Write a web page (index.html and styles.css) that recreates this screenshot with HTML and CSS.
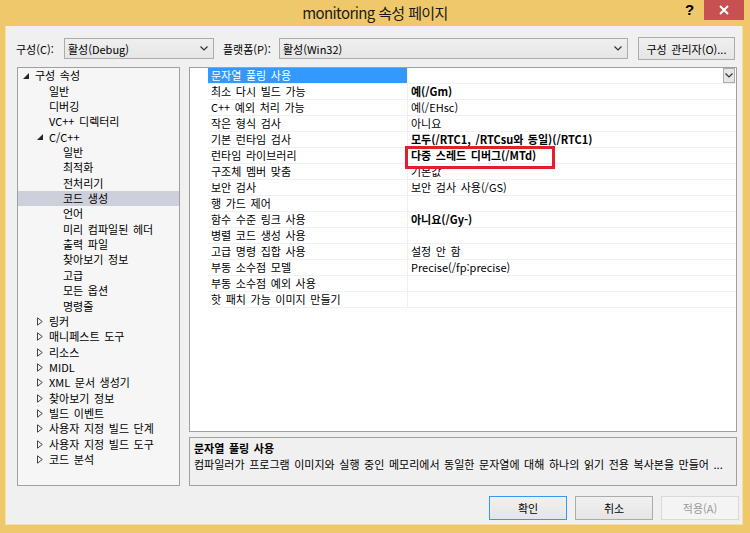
FILE: index.html
```html
<!DOCTYPE html>
<html lang="ko">
<head>
<meta charset="utf-8">
<link rel="stylesheet" href="styles.css">
</head>
<body>
<div class="window">
  <div class="titlebar">
    <div class="title">monitoring 속성 페이지</div>
    <div class="help">?</div>
    <div class="close"><svg width="10" height="10" viewBox="0 0 10 10"><path d="M1 1L9 9M9 1L1 9" stroke="#fff" stroke-width="2"/></svg></div>
  </div>
  <div class="client">
    <div class="toolbar">
      <span class="lbl lbl1">구성(C):</span>
      <div class="combo combo1"><span>활성(Debug)</span><svg class="chev" width="8" height="5" viewBox="0 0 8 5"><path d="M0.5 0.5L4 4L7.5 0.5" fill="none" stroke="#333" stroke-width="1.2"/></svg></div>
      <span class="lbl lbl2">플랫폼(P):</span>
      <div class="combo combo2"><span>활성(Win32)</span><svg class="chev" width="8" height="5" viewBox="0 0 8 5"><path d="M0.5 0.5L4 4L7.5 0.5" fill="none" stroke="#333" stroke-width="1.2"/></svg></div>
      <div class="btn cfgbtn">구성 관리자(O)...</div>
    </div>
    <div class="main">
      <div class="tree">
        <div class="ti l0"><span class="arr"><svg width="6" height="6" viewBox="0 0 6 6"><path d="M6 0V6H0Z" fill="#262626"/></svg></span>구성 속성</div>
        <div class="ti l1"><span class="arr"></span>일반</div>
        <div class="ti l1"><span class="arr"></span>디버깅</div>
        <div class="ti l1"><span class="arr"></span>VC++ 디렉터리</div>
        <div class="ti l1"><span class="arr"><svg width="6" height="6" viewBox="0 0 6 6"><path d="M6 0V6H0Z" fill="#262626"/></svg></span>C/C++</div>
        <div class="ti l2"><span class="arr"></span>일반</div>
        <div class="ti l2"><span class="arr"></span>최적화</div>
        <div class="ti l2"><span class="arr"></span>전처리기</div>
        <div class="ti l2 sel"><span class="arr"></span>코드 생성</div>
        <div class="ti l2"><span class="arr"></span>언어</div>
        <div class="ti l2"><span class="arr"></span>미리 컴파일된 헤더</div>
        <div class="ti l2"><span class="arr"></span>출력 파일</div>
        <div class="ti l2"><span class="arr"></span>찾아보기 정보</div>
        <div class="ti l2"><span class="arr"></span>고급</div>
        <div class="ti l2"><span class="arr"></span>모든 옵션</div>
        <div class="ti l2"><span class="arr"></span>명령줄</div>
        <div class="ti l1"><span class="arr"><svg width="6" height="9" viewBox="0 0 6 9"><path d="M0.5 0.8V8.2L5.3 4.5Z" fill="none" stroke="#444" stroke-width="1"/></svg></span>링커</div>
        <div class="ti l1"><span class="arr"><svg width="6" height="9" viewBox="0 0 6 9"><path d="M0.5 0.8V8.2L5.3 4.5Z" fill="none" stroke="#444" stroke-width="1"/></svg></span>매니페스트 도구</div>
        <div class="ti l1"><span class="arr"><svg width="6" height="9" viewBox="0 0 6 9"><path d="M0.5 0.8V8.2L5.3 4.5Z" fill="none" stroke="#444" stroke-width="1"/></svg></span>리소스</div>
        <div class="ti l1"><span class="arr"><svg width="6" height="9" viewBox="0 0 6 9"><path d="M0.5 0.8V8.2L5.3 4.5Z" fill="none" stroke="#444" stroke-width="1"/></svg></span>MIDL</div>
        <div class="ti l1"><span class="arr"><svg width="6" height="9" viewBox="0 0 6 9"><path d="M0.5 0.8V8.2L5.3 4.5Z" fill="none" stroke="#444" stroke-width="1"/></svg></span>XML 문서 생성기</div>
        <div class="ti l1"><span class="arr"><svg width="6" height="9" viewBox="0 0 6 9"><path d="M0.5 0.8V8.2L5.3 4.5Z" fill="none" stroke="#444" stroke-width="1"/></svg></span>찾아보기 정보</div>
        <div class="ti l1"><span class="arr"><svg width="6" height="9" viewBox="0 0 6 9"><path d="M0.5 0.8V8.2L5.3 4.5Z" fill="none" stroke="#444" stroke-width="1"/></svg></span>빌드 이벤트</div>
        <div class="ti l1"><span class="arr"><svg width="6" height="9" viewBox="0 0 6 9"><path d="M0.5 0.8V8.2L5.3 4.5Z" fill="none" stroke="#444" stroke-width="1"/></svg></span>사용자 지정 빌드 단계</div>
        <div class="ti l1"><span class="arr"><svg width="6" height="9" viewBox="0 0 6 9"><path d="M0.5 0.8V8.2L5.3 4.5Z" fill="none" stroke="#444" stroke-width="1"/></svg></span>사용자 지정 빌드 도구</div>
        <div class="ti l1"><span class="arr"><svg width="6" height="9" viewBox="0 0 6 9"><path d="M0.5 0.8V8.2L5.3 4.5Z" fill="none" stroke="#444" stroke-width="1"/></svg></span>코드 분석</div>
      </div>
      <div class="rightcol">
        <div class="grid">
          <div class="prow selrow"><span class="gut"></span><span class="pname">문자열 풀링 사용</span><span class="pval ddcell"><span class="ddbtn"><svg width="8" height="5" viewBox="0 0 8 5"><path d="M0.5 0.5L4 4L7.5 0.5" fill="none" stroke="#333" stroke-width="1.2"/></svg></span></span></div>
          <div class="prow"><span class="gut"></span><span class="pname">최소 다시 빌드 가능</span><span class="pval b">예(/Gm)</span></div>
          <div class="prow"><span class="gut"></span><span class="pname">C++ 예외 처리 가능</span><span class="pval">예(/EHsc)</span></div>
          <div class="prow"><span class="gut"></span><span class="pname">작은 형식 검사</span><span class="pval">아니요</span></div>
          <div class="prow"><span class="gut"></span><span class="pname">기본 런타임 검사</span><span class="pval b">모두(/RTC1, /RTCsu와 동일)(/RTC1)</span></div>
          <div class="prow"><span class="gut"></span><span class="pname">런타임 라이브러리</span><span class="pval b">다중 스레드 디버그(/MTd)</span></div>
          <div class="prow"><span class="gut"></span><span class="pname">구조체 멤버 맞춤</span><span class="pval">기본값</span></div>
          <div class="prow"><span class="gut"></span><span class="pname">보안 검사</span><span class="pval">보안 검사 사용(/GS)</span></div>
          <div class="prow"><span class="gut"></span><span class="pname">행 가드 제어</span><span class="pval"></span></div>
          <div class="prow"><span class="gut"></span><span class="pname">함수 수준 링크 사용</span><span class="pval b">아니요(/Gy-)</span></div>
          <div class="prow"><span class="gut"></span><span class="pname">병렬 코드 생성 사용</span><span class="pval"></span></div>
          <div class="prow"><span class="gut"></span><span class="pname">고급 명령 집합 사용</span><span class="pval">설정 안 함</span></div>
          <div class="prow"><span class="gut"></span><span class="pname">부동 소수점 모델</span><span class="pval">Precise(/fp:precise)</span></div>
          <div class="prow"><span class="gut"></span><span class="pname">부동 소수점 예외 사용</span><span class="pval"></span></div>
          <div class="prow"><span class="gut"></span><span class="pname">핫 패치 가능 이미지 만들기</span><span class="pval"></span></div>
          <div class="redbox"></div>
        </div>
        <div class="desc">
          <div class="dtitle">문자열 풀링 사용</div>
          <div class="dtext">컴파일러가 프로그램 이미지와 실행 중인 메모리에서 동일한 문자열에 대해 하나의 읽기 전용 복사본을 만들어 ...</div>
        </div>
      </div>
    </div>
    <div class="buttons">
      <div class="btn dbtn default">확인</div>
      <div class="btn dbtn">취소</div>
      <div class="btn dbtn disabled">적용(A)</div>
    </div>
  </div>
</div>
</body>
</html>
```
FILE: styles.css
```css
* { box-sizing: border-box; }
html, body { margin: 0; padding: 0; }
body {
  width: 750px; height: 533px; overflow: hidden;
  font-family: "Noto Sans CJK KR", sans-serif;
  font-size: 11px;
  letter-spacing: 0;
  word-spacing: 1.5px;
  color: #000;
}
.window {
  width: 750px; height: 533px;
  background: #efc86c;
  display: flex; flex-direction: column;
}
.titlebar {
  height: 26px; position: relative; flex: none;
  display: flex; align-items: center; justify-content: center;
}
.title { font-size: 15px; letter-spacing: -0.6px; word-spacing: 0; color: #1a1a1a; margin-top: -1px; }
.help {
  position: absolute; left: 685px; top: 1px;
  font-family: "Liberation Sans", sans-serif; font-weight: bold; font-size: 15px;
}
.close {
  position: absolute; left: 704px; top: 0; width: 40px; height: 20px;
  background: #c75050; display: flex; align-items: center; justify-content: center;
}
.client {
  flex: 1; margin: 0 7px 8px 5px;
  background: #f0f0f0;
  border: 1px solid #f7e0a8; border-top: none;
  padding: 11px 0 0 10px;
  display: flex; flex-direction: column;
}
.toolbar { display: flex; align-items: center; height: 23px; }
.lbl { flex: none; }
.lbl1 { width: 48px; }
.lbl2 { width: 56px; margin-left: 9px; }
.combo {
  height: 21px; border: 1px solid #acacac;
  background: linear-gradient(#efefef, #e6e6e6);
  display: flex; align-items: center; justify-content: space-between;
  padding: 0 5px 0 3px;
}
.combo1 { width: 150px; }
.combo2 { width: 349px; }
.chev { flex: none; }
.btn {
  border: 1px solid #acacac;
  background: linear-gradient(#f0f0f0, #e5e5e5);
  display: flex; align-items: center; justify-content: center;
}
.cfgbtn { width: 97px; height: 23px; margin-left: 10px; }
.main { display: flex; margin-top: 7px; height: 419px; padding-left: 1px; }
.tree {
  width: 163px; height: 419px; flex: none;
  border: 1px solid #a0a0a0;
  background: #f6f6f6;
}
.ti { height: 15.36px; line-height: 15px; display: flex; align-items: center; white-space: nowrap; }
.ti.sel { background: #cdcfdb; }
.arr { width: 12px; flex: none; display: flex; align-items: center; }
.l0 { padding-left: 5px; }
.l1 { padding-left: 19px; }
.l2 { padding-left: 33px; }
.rightcol { margin-left: 9px; width: 548px; display: flex; flex-direction: column; }
.grid {
  position: relative;
  height: 365px; border: 1px solid #a0a0a0; background: #fff;
}
.prow { display: flex; height: 16px; line-height: 15px; }
.gut { width: 18px; flex: none; }
.pname {
  width: 200px; flex: none; padding-left: 3px;
  border-bottom: 1px solid #f0f0f0; border-right: 1px solid #f0f0f0;
  white-space: nowrap; overflow: hidden;
}
.pval {
  flex: 1; padding-left: 3px; border-bottom: 1px solid #f0f0f0;
  white-space: nowrap;
}
.pval.b { font-weight: bold; }
.selrow .pname { background: #3399ff; color: #fff; }
.pval.ddcell { display: flex; justify-content: flex-end; align-items: flex-start; padding-right: 1px; }
.ddbtn {
  width: 12px; height: 15px; border: 1px solid #acacac;
  background: #e6e6e6; display: flex; align-items: center; justify-content: center;
}
.redbox {
  position: absolute; left: 215px; top: 78px; width: 150px; height: 23px;
  border: 3px solid #e2202a;
}
.desc {
  margin-top: 5px; height: 49px; border: 1px solid #a0a0a0;
  background: #f0f0f0; padding: 2px 0 0 4px;
}
.dtitle { font-weight: bold; line-height: 16px; }
.dtext { line-height: 17px; white-space: nowrap; }
.buttons {
  display: flex; justify-content: flex-end; gap: 8px;
  margin-top: 10px; padding-right: 3px;
}
.dbtn { width: 78px; height: 24px; }
.dbtn.default { border-color: #3399ff; }
.dbtn.disabled { background: #f4f4f4; border-color: #d9d9d9; color: #9a9a9a; }
```
